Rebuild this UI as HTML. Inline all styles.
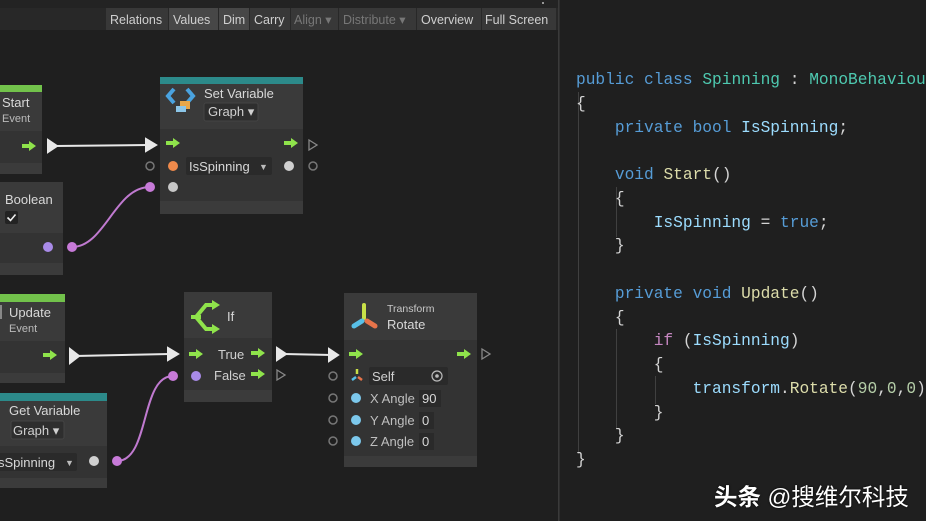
<!DOCTYPE html>
<html><head><meta charset="utf-8"><style>
*{margin:0;padding:0}
body{width:926px;height:521px;overflow:hidden;background:#1f1f1f;position:relative;font-family:"Liberation Sans",sans-serif}
#code{position:absolute;left:576px;top:69px;font-family:"Liberation Mono",monospace;font-size:16.2px;line-height:23.75px;color:#d4d4d4;white-space:pre}
.k{color:#569cd6}.t{color:#4ec9b0}.v{color:#9cdcfe}.m{color:#dcdcaa}.n{color:#b5cea8}.c{color:#c586c0}
.g{position:absolute;width:1px;background:#404040}
#wm{position:absolute;left:714px;top:478px;font-family:"Liberation Sans","Noto Sans CJK SC",sans-serif;font-size:23.5px;color:#fff;white-space:nowrap;text-shadow:0 0 2px #000}
</style></head><body>
<svg width="560" height="521" style="position:absolute;left:0;top:0" font-family="Liberation Sans, sans-serif">
<defs>
<symbol id="ga" viewBox="0 0 14 10" overflow="visible"><path d="M0,3 h7 v-3 l7,5 l-7,5 v-3 h-7z" fill="#8fe34b"/></symbol>
</defs>
<rect width="560" height="521" fill="#1f1f1f"/>
<rect width="560" height="8" fill="#232323"/>
<rect y="8" width="558" height="22" fill="#282828"/>
<circle cx="543" cy="3" r="1" fill="#bbb"/>
<g font-size="12.5" fill="#cfcfcf">
<rect x="106" y="8" width="62" height="22" fill="#383838"/><text x="110" y="24">Relations</text>
<rect x="169" y="8" width="49" height="22" fill="#474747"/><text x="173" y="24">Values</text>
<rect x="219" y="8" width="30" height="22" fill="#474747"/><text x="223" y="24">Dim</text>
<rect x="250" y="8" width="40" height="22" fill="#383838"/><text x="254" y="24">Carry</text>
<rect x="291" y="8" width="47" height="22" fill="#383838"/><text x="294" y="24" fill="#777">Align ▾</text>
<rect x="339" y="8" width="77" height="22" fill="#383838"/><text x="343" y="24" fill="#777">Distribute ▾</text>
<rect x="417" y="8" width="64" height="22" fill="#383838"/><text x="421" y="24">Overview</text>
<rect x="482" y="8" width="74" height="22" fill="#383838"/><text x="485" y="24">Full Screen</text>
</g>
<g stroke="#e8e8e8" stroke-width="2" fill="#e8e8e8">
<line x1="55" y1="146" x2="148" y2="145"/><path d="M48,140 l9,6 l-9,6z"/><path d="M146,139 l10,6 l-10,6z"/>
<line x1="75" y1="356" x2="170" y2="354"/><path d="M70,349 l9,7 l-9,7z"/><path d="M168,348 l10,6 l-10,6z"/>
<line x1="284" y1="354" x2="332" y2="355"/><path d="M277,348 l9,6 l-9,6z"/><path d="M329,349 l9,6 l-9,6z"/>
</g>
<g stroke="#c07ad0" stroke-width="2" fill="none">
<path d="M72,247 C105,247 115,187 150,187"/>
<path d="M117,461 C150,461 140,376 173,376"/>
</g>
<circle cx="72" cy="247" r="5" fill="#c77ad8"/><circle cx="150" cy="187" r="5" fill="#c77ad8"/>
<circle cx="117" cy="461" r="5" fill="#c77ad8"/><circle cx="173" cy="376" r="5" fill="#c77ad8"/>
<rect x="0" y="85" width="42" height="7" fill="#72c24b"/>
<rect x="0" y="92" width="42" height="39" fill="#3a3a3a"/>
<rect x="0" y="131" width="42" height="32" fill="#333"/>
<rect x="0" y="163" width="42" height="11" fill="#3b3b3b"/>
<text x="2" y="107" font-size="13" fill="#d8d8d8">Start</text>
<text x="2" y="122" font-size="11" fill="#bbb">Event</text>
<use href="#ga" x="22" y="141" width="14" height="10"/>
<rect x="0" y="182" width="63" height="51" fill="#3a3a3a"/>
<rect x="0" y="233" width="63" height="30" fill="#333"/>
<rect x="0" y="263" width="63" height="12" fill="#3b3b3b"/>
<text x="5" y="204" font-size="13" fill="#d8d8d8">Boolean</text>
<rect x="5" y="211" width="13" height="13" rx="2" fill="#232323"/>
<path d="M7.5,217.5 l3,3 l5,-6" stroke="#eee" stroke-width="1.6" fill="none"/>
<circle cx="48" cy="247" r="5" fill="#a98be8"/>
<rect x="160" y="77" width="143" height="7" fill="#2c8a8a"/>
<rect x="160" y="84" width="143" height="45" fill="#3a3a3a"/>
<rect x="160" y="129" width="143" height="72" fill="#333"/>
<rect x="160" y="201" width="143" height="13" fill="#3b3b3b"/>
<path d="M174,89 l-6,7 l6,7" stroke="#4aa3e0" stroke-width="4" fill="none"/>
<path d="M187,89 l6,7 l-6,7" stroke="#4aa3e0" stroke-width="4" fill="none"/>
<rect x="180" y="101" width="10" height="8" fill="#e8a74a"/><rect x="176" y="106" width="10" height="6" fill="#8cc6e8"/>
<text x="204" y="98" font-size="13" fill="#d8d8d8">Set Variable</text>
<rect x="204" y="103" width="54" height="18" rx="2" fill="#2e2e2e" stroke="#444"/>
<text x="208" y="116" font-size="13" fill="#d0d0d0">Graph ▾</text>
<use href="#ga" x="166" y="138" width="14" height="10"/>
<use href="#ga" x="284" y="138" width="14" height="10"/>
<path d="M309,140 l8,5 l-8,5z" stroke="#888" stroke-width="1.3" fill="none"/>
<circle cx="150" cy="166" r="4" stroke="#777" stroke-width="1.5" fill="none"/>
<circle cx="313" cy="166" r="4" stroke="#777" stroke-width="1.5" fill="none"/>
<circle cx="173" cy="166" r="5" fill="#f08a4b"/>
<rect x="186" y="157" width="86" height="18" rx="2" fill="#2a2a2a"/>
<text x="189" y="171" font-size="13" fill="#d8d8d8">IsSpinning</text>
<text x="259" y="170" font-size="9" fill="#bbb">▼</text>
<circle cx="289" cy="166" r="5" fill="#d0d0d0"/>
<circle cx="173" cy="187" r="5" fill="#c8c8c8"/>
<rect x="0" y="294" width="65" height="8" fill="#72c24b"/>
<rect x="0" y="302" width="65" height="39" fill="#3a3a3a"/>
<rect x="0" y="341" width="65" height="32" fill="#333"/>
<rect x="0" y="373" width="65" height="10" fill="#3b3b3b"/>
<rect x="0" y="305" width="2" height="14" fill="#888"/>
<text x="9" y="317" font-size="13" fill="#d8d8d8">Update</text>
<text x="9" y="332" font-size="11" fill="#bbb">Event</text>
<use href="#ga" x="43" y="350" width="14" height="10"/>
<rect x="0" y="393" width="107" height="8" fill="#2c8a8a"/>
<rect x="0" y="401" width="107" height="45" fill="#3a3a3a"/>
<rect x="0" y="446" width="107" height="32" fill="#333"/>
<rect x="0" y="478" width="107" height="10" fill="#3b3b3b"/>
<text x="9" y="415" font-size="13" fill="#d8d8d8">Get Variable</text>
<rect x="11" y="421" width="53" height="18" rx="2" fill="#2e2e2e" stroke="#444"/>
<text x="13" y="435" font-size="13" fill="#d0d0d0">Graph ▾</text>
<rect x="-2" y="453" width="79" height="18" rx="2" fill="#2a2a2a"/>
<text x="-2" y="467" font-size="13" fill="#d8d8d8">sSpinning</text>
<text x="65" y="466" font-size="9" fill="#bbb">▼</text>
<circle cx="94" cy="461" r="5" fill="#d0d0d0"/>
<rect x="184" y="292" width="88" height="46" fill="#3a3a3a"/>
<rect x="184" y="338" width="88" height="52" fill="#333"/>
<rect x="184" y="390" width="88" height="12" fill="#3b3b3b"/>
<path d="M216,305 h-10 l-10,12 l10,12 h10" stroke="#8fe34b" stroke-width="4" fill="none"/>
<path d="M191,317 h10" stroke="#8fe34b" stroke-width="4"/>
<path d="M212,300 l8,5 l-8,5z M212,324 l8,5 l-8,5z" fill="#8fe34b"/>
<text x="227" y="321" font-size="13" fill="#d8d8d8">If</text>
<use href="#ga" x="189" y="349" width="14" height="10"/>
<text x="218" y="359" font-size="13" fill="#d0d0d0">True</text>
<use href="#ga" x="251" y="348" width="14" height="10"/>
<circle cx="196" cy="376" r="5" fill="#a98be8"/>
<text x="214" y="380" font-size="13" fill="#d0d0d0">False</text>
<use href="#ga" x="251" y="369" width="14" height="10"/>
<path d="M277,370 l8,5 l-8,5z" stroke="#888" stroke-width="1.3" fill="none"/>
<rect x="344" y="293" width="133" height="47" fill="#3a3a3a"/>
<rect x="344" y="340" width="133" height="116" fill="#333"/>
<rect x="344" y="456" width="133" height="11" fill="#3b3b3b"/>
<path d="M364,305 v13" stroke="#c8e048" stroke-width="4" stroke-linecap="round"/>
<path d="M362,321 l-8,5" stroke="#58c0e8" stroke-width="5" stroke-linecap="round"/>
<path d="M367,321 l8,5" stroke="#e8744a" stroke-width="5" stroke-linecap="round"/>
<text x="387" y="312" font-size="10.5" fill="#c8c8c8">Transform</text>
<text x="387" y="329" font-size="13" fill="#d8d8d8">Rotate</text>
<use href="#ga" x="349" y="349" width="14" height="10"/>
<use href="#ga" x="457" y="349" width="14" height="10"/>
<path d="M482,349 l8,5 l-8,5z" stroke="#888" stroke-width="1.3" fill="none"/>
<g stroke="#777" stroke-width="1.5" fill="none">
<circle cx="333" cy="376" r="4"/><circle cx="333" cy="398" r="4"/><circle cx="333" cy="420" r="4"/><circle cx="333" cy="441" r="4"/>
</g>
<path d="M357,369 v5" stroke-width="2.5" stroke="#c8e048"/>
<path d="M356,377 l-4,3" stroke="#58c0e8" stroke-width="2.5"/><path d="M358,377 l4,3" stroke="#e8744a" stroke-width="2.5"/>
<rect x="369" y="367" width="79" height="18" rx="2" fill="#2a2a2a"/>
<text x="372" y="381" font-size="13" fill="#d0d0d0">Self</text>
<circle cx="437" cy="376" r="5" stroke="#bbb" stroke-width="1.2" fill="none"/><circle cx="437" cy="376" r="1.8" fill="#bbb"/>
<circle cx="356" cy="398" r="5" fill="#7cc8ec"/><circle cx="356" cy="420" r="5" fill="#7cc8ec"/><circle cx="356" cy="441" r="5" fill="#7cc8ec"/>
<g font-size="13" fill="#bfbfbf"><text x="370" y="403">X Angle</text><text x="370" y="425">Y Angle</text><text x="370" y="446">Z Angle</text></g>
<rect x="419" y="390" width="22" height="17" fill="#2a2a2a"/><rect x="419" y="412" width="15" height="17" fill="#2a2a2a"/><rect x="419" y="433" width="15" height="17" fill="#2a2a2a"/>
<g font-size="13" fill="#d8d8d8"><text x="422" y="403">90</text><text x="422" y="425">0</text><text x="422" y="446">0</text></g>
<rect x="558" y="0" width="12" height="521" fill="#2e2e2e"/>
<rect x="558" y="0" width="1" height="521" fill="#3a3a3a"/>
</svg>
<div class="g" style="left:578px;top:92px;height:362px"></div>
<div class="g" style="left:616px;top:187px;height:50px"></div>
<div class="g" style="left:616px;top:329px;height:100px"></div>
<div class="g" style="left:655px;top:376px;height:28px"></div>
<div id="code"><span class="k">public</span> <span class="k">class</span> <span class="t">Spinning</span> : <span class="t">MonoBehaviour</span>
{
    <span class="k">private</span> <span class="k">bool</span> <span class="v">IsSpinning</span>;

    <span class="k">void</span> <span class="m">Start</span>()
    {
        <span class="v">IsSpinning</span> = <span class="k">true</span>;
    }

    <span class="k">private</span> <span class="k">void</span> <span class="m">Update</span>()
    {
        <span class="c">if</span> (<span class="v">IsSpinning</span>)
        {
            <span class="v">transform</span>.<span class="m">Rotate</span>(<span class="n">90</span>,<span class="n">0</span>,<span class="n">0</span>);
        }
    }
}</div>
<div id="wm"><b>头条</b> @搜维尔科技</div>
</body></html>
